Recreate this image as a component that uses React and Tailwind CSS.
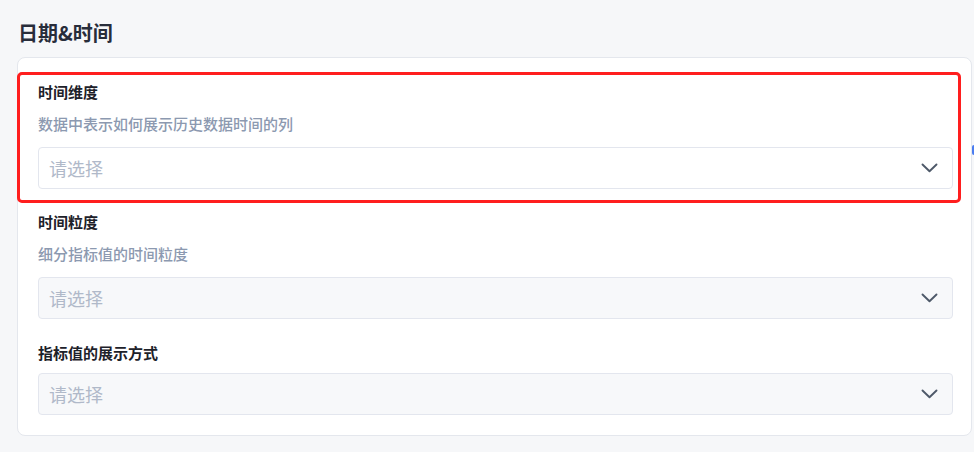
const font = { fontFamily: '"Noto Sans CJK SC", "Noto Sans", sans-serif' };

function Chevron() {
  return (
    <svg width="17" height="10" viewBox="0 0 17 10" fill="none" className="text-[#4e5969]">
      <polyline points="1.5,1.5 8.5,8.2 15.5,1.5" stroke="currentColor" strokeWidth="1.9" strokeLinecap="round" strokeLinejoin="round" />
    </svg>
  );
}

function Select({ disabled }) {
  return (
    <div
      className={`flex h-[42px] items-center justify-between rounded-[4px] border border-[#e3e6ee] pl-[10px] pr-[14px] ${
        disabled ? 'bg-[#f7f8fa]' : 'bg-white'
      }`}
    >
      <span className="text-[18px] leading-[24px] text-[#b0b9c9]">请选择</span>
      <Chevron />
    </div>
  );
}

export default function App() {
  return (
    <div
      className="relative h-[452px] w-full overflow-hidden bg-[#f6f7f9] pl-[17px] pr-[2px] pt-[19px]"
      style={font}
    >
      <h2 className="mb-[10px] pl-[1px] text-[20px] font-bold leading-[28px] text-[#282d3b]">日期&amp;时间</h2>

      <div className="rounded-[8px] border border-[#e4e7ed] bg-white pb-5 pl-5 pr-[18px] pt-6">
        <div>
          <div className="text-[15px] font-bold leading-5 text-[#1d2129]">时间维度</div>
          <div className="mt-3 text-[15px] font-medium leading-5 text-[#8c99b0]">数据中表示如何展示历史数据时间的列</div>
          <div className="mt-[13px]">
            <Select />
          </div>
        </div>

        <div className="mt-[23px]">
          <div className="text-[15px] font-bold leading-5 text-[#1d2129]">时间粒度</div>
          <div className="mt-3 text-[15px] font-medium leading-5 text-[#8c99b0]">细分指标值的时间粒度</div>
          <div className="mt-[13px]">
            <Select disabled />
          </div>
        </div>

        <div className="mt-6">
          <div className="text-[15px] font-bold leading-5 text-[#1d2129]">指标值的展示方式</div>
          <div className="mt-[10px]">
            <Select disabled />
          </div>
        </div>
      </div>

      {/* annotation highlight */}
      <div className="pointer-events-none absolute left-[17px] top-[72px] h-[131px] w-[944px] rounded-[5px] border-[3px] border-[#ff1e1e]" />
      <div className="absolute right-0 top-[145px] h-[10px] w-[2px] rounded-l-full bg-[#4a7cf0]" />
    </div>
  );
}
